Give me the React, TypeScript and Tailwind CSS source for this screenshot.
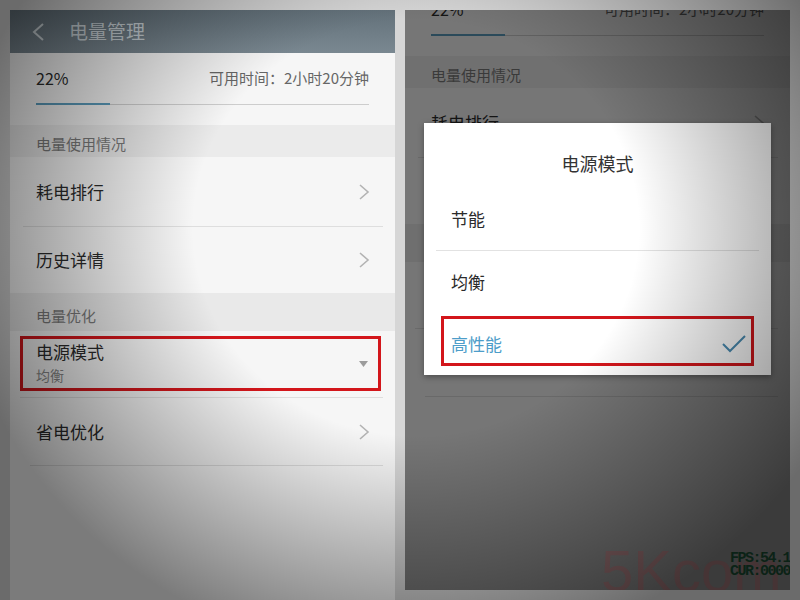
import React from 'react';

// Composite of two phone screenshots: battery settings list, and the power-mode picker dialog

const Chevron = () => (
  <svg width="12" height="18" viewBox="0 0 12 18" fill="none">
    <polyline points="2,2 10,9 2,16" stroke="#b3b3b3" strokeWidth="1.6" />
  </svg>
);

const Row: React.FC<{ title: string; h: string; hidden?: boolean }> = ({ title, h, hidden }) => (
  <div className={`${h} flex items-center justify-between pl-[26px] pr-[25px] ${hidden ? 'invisible' : ''}`}>
    <span className="text-[17px] text-[#2b2b2b]">{title}</span>
    <Chevron />
  </div>
);

// covered: the part of the list that sits under the dialog on the right screenshot
const BatteryContent: React.FC<{ annotate?: boolean; covered?: boolean }> = ({ annotate, covered }) => (
  <div className="flex flex-col">
    {/* Level + remaining time */}
    <div className="h-[72px] px-[26px] pt-[15px]">
      <div className="flex h-[20px] items-center justify-between">
        <span className="text-[16px] text-[#2b2b2b]">22%</span>
        <span className="text-[15px] text-[#666666]">可用时间：2小时20分钟</span>
      </div>
      <div className="mt-[15px] flex h-[2px] items-center">
        <div className="h-[2px] w-[74px] bg-[#5b9cbc]" />
        <div className="h-px flex-1 bg-[#cdcdcd]" />
      </div>
    </div>

    <div className="h-[32px] bg-[#ebebeb] px-[26px] pt-[9px] text-[15px] leading-[20px] text-[#7a7a7a]">
      电量使用情况
    </div>
    <Row title="耗电排行" h="h-[69px]" />
    <div className="ml-[13px] mr-[12px] h-px bg-[#dedede]" />
    <Row title="历史详情" h="h-[66px]" hidden={covered} />

    <div className="h-[38px] bg-[#e9e9e9] px-[26px] pt-[13px] text-[15px] leading-[20px] text-[#7a7a7a]">
      <span className={covered ? 'invisible' : ''}>电量优化</span>
    </div>
    <div className="relative flex h-[66px] items-center justify-between pl-[26px] pr-[27px]">
      <div className={`flex flex-col pb-[2px] ${covered ? 'invisible' : ''}`}>
        <span className="text-[17px] leading-[22px] text-[#2b2b2b]">电源模式</span>
        <span className="mt-[2px] text-[14px] leading-[20px] text-[#8a8a8a]">均衡</span>
      </div>
      <svg width="9" height="6" viewBox="0 0 9 6">
        <polygon points="0,0 9,0 4.5,6" fill="#9c9c9c" />
      </svg>
      {annotate && (
        <div className="pointer-events-none absolute bottom-[6px] left-[10px] right-[14px] top-[5px] border-[3px] border-[#d3161b]" />
      )}
    </div>
    <div className="ml-[10px] mr-[12px] h-px bg-[#dedede]" />
    <Row title="省电优化" h="h-[67px]" hidden={covered} />
    <div className="ml-[20px] mr-[12px] h-px bg-[#dcdcdc]" />
  </div>
);

export default function App() {
  return (
    <div className="relative flex h-[600px] w-[800px] gap-[10px] overflow-hidden bg-[#d6d6d6] pl-[10px] pt-[10px] font-['Noto_Sans_CJK_SC','Noto_Sans',sans-serif]">
      {/* Left screenshot */}
      <div className="flex h-[590px] w-[385px] flex-col overflow-hidden bg-[#f6f6f6]">
        <div className="flex h-[43px] items-center bg-[linear-gradient(180deg,#63717a,#7a8891)] pl-[21px]">
          <svg width="14" height="20" viewBox="0 0 14 20" fill="none">
            <polyline points="12,2 3,10 12,18" stroke="#cdd5d9" strokeWidth="2" />
          </svg>
          <span className="ml-[24px] text-[19px] text-[#cbd4d9]">电量管理</span>
        </div>
        <BatteryContent annotate />
      </div>

      {/* Right screenshot: dimmed list with dialog on top */}
      <div className="relative h-[580px] w-[385px] overflow-hidden bg-[#f6f6f6]">
        <div className="-mt-[26px]">
          <BatteryContent covered />
        </div>
        <div className="absolute inset-0 bg-black/52" />

        <div className="absolute left-[19px] top-[113px] flex h-[252px] w-[347px] flex-col bg-white shadow-[0_2px_6px_rgba(0,0,0,0.35)]">
          <div className="flex h-[65px] items-center justify-center pt-[15px] text-[18px] text-[#333333]">
            电源模式
          </div>
          <div className="flex h-[62px] items-center px-[27px] text-[17px] text-[#2b2b2b]">节能</div>
          <div className="mx-[12px] h-px bg-[#e2e2e2]" />
          <div className="flex h-[62px] items-center px-[27px] text-[17px] text-[#2b2b2b]">均衡</div>
          <div className="relative flex h-[62px] items-center justify-between pl-[27px] pr-[24px] text-[17px] text-[#4d9dc9]">
            <span>高性能</span>
            <svg width="26" height="20" viewBox="0 0 26 20" fill="none">
              <polyline points="2,10 9,17 24,2" stroke="#4a8db3" strokeWidth="2" />
            </svg>
            <div className="pointer-events-none absolute bottom-[9px] left-[17px] right-[17px] top-[3px] border-[3px] border-[#d3161b]" />
          </div>
        </div>

        {/* Recorder watermark */}
        <div className="absolute bottom-[-10px] left-[196px] font-['Liberation_Sans',sans-serif] text-[58px] leading-none text-[#d04048]/25">
          5Kcom
        </div>
        <div className="absolute bottom-[12px] right-[0px] flex flex-col font-['Liberation_Mono',monospace] text-[15px] font-bold leading-[13px] tracking-[-1.5px] text-[#16452d]">
          <span>FPS:54.1</span>
          <span>CUR:0000</span>
        </div>
      </div>

      {/* Vignette over the whole photo */}
      <div className="pointer-events-none absolute inset-0 bg-[radial-gradient(ellipse_58%_72%_at_52%_38%,rgba(0,0,0,0)_48%,rgba(0,0,0,0.5)_100%)]" />
    </div>
  );
}
